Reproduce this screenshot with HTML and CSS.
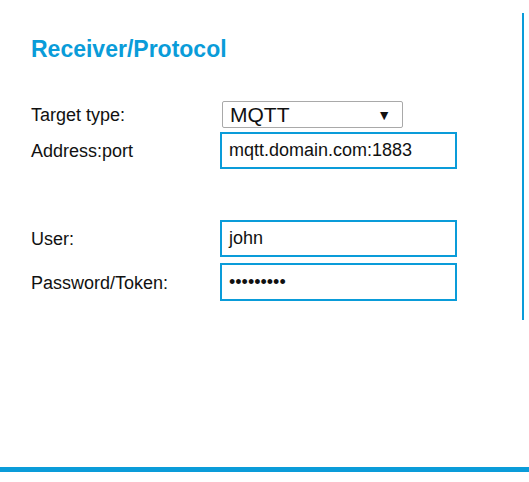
FILE: index.html
```html
<!DOCTYPE html>
<html>
<head>
<meta charset="utf-8">
<link rel="stylesheet" href="styles.css">
</head>
<body>
<div class="panel">
  <h2 class="title">Receiver/Protocol</h2>
  <div class="group">
    <div class="row">
      <label class="label">Target type:</label>
      <div class="select"><span>MQTT</span><span class="arrow">▼</span></div>
    </div>
    <div class="row">
      <label class="label">Address:port</label>
      <div class="input">mqtt.domain.com:1883</div>
    </div>
  </div>
  <div class="group group2">
    <div class="row">
      <label class="label">User:</label>
      <div class="input">john</div>
    </div>
    <div class="row">
      <label class="label">Password/Token:</label>
      <div class="input pwd">•••••••••</div>
    </div>
  </div>
</div>
<div class="footer-bar"></div>
</body>
</html>
```
FILE: styles.css
```css
html, body {
  margin: 0;
  padding: 0;
  background: #fff;
}
body {
  font-family: "Liberation Sans", Arial, sans-serif;
  color: #111;
  width: 529px;
  height: 482px;
  position: relative;
}
.panel {
  margin-top: 13px;
  width: 491px;
  height: 307px;
  padding-left: 31px;
  border-right: 2px solid #0a9cd9;
  box-sizing: content-box;
}
.title {
  margin: 0;
  padding-top: 23px;
  font-size: 23px;
  line-height: 26px;
  font-weight: bold;
  color: #0a9cd9;
}
.group {
  margin-top: 39px;
  display: flex;
  flex-direction: column;
  gap: 4px;
}
.group2 {
  margin-top: 51px;
  gap: 6px;
}
.row {
  display: flex;
  align-items: center;
}
.label {
  width: 189px;
  font-size: 18px;
  line-height: 21px;
  padding-top: 2px;
}
.select {
  width: 181px;
  height: 27px;
  box-sizing: border-box;
  border: 1px solid #a9a9a9;
  border-radius: 2px;
  margin-left: 2px;
  display: flex;
  align-items: center;
  justify-content: space-between;
  padding: 0 11px 0 7px;
  font-size: 21px;
}
.arrow {
  font-size: 14px;
}
.input {
  width: 237px;
  height: 37px;
  box-sizing: border-box;
  border: 2px solid #0a9cd9;
  display: flex;
  align-items: center;
  padding-left: 7px;
  font-size: 18px;
}
.pwd {
  height: 38px;
}
.footer-bar {
  position: absolute;
  left: 0;
  right: 0;
  top: 467px;
  height: 5px;
  background: #0a9cd9;
}
```
